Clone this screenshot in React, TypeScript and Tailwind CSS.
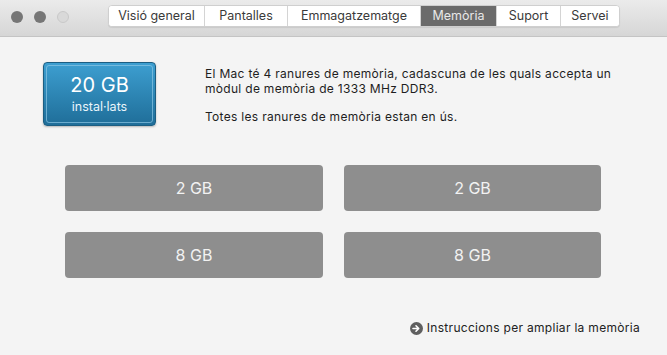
import React from 'react';

const tabs = ['Visió general', 'Pantalles', 'Emmagatzematge', 'Memòria', 'Suport', 'Servei'];
const tabWidths = ['w-[95px]', 'w-[83px]', 'w-[133px]', 'w-[76px]', 'w-[64px]', 'w-[59px]'];
const slots = ['2 GB', '2 GB', '8 GB', '8 GB'];

export default function App() {
    return (
        <div className="w-[667px] h-[355px] bg-[#f4f4f4] flex flex-col overflow-hidden" style={{ fontFamily: 'Inter, Roboto, "Liberation Sans", sans-serif' }}>

            {/* Title bar with traffic lights and tabs */}
            <div className="h-[37px] shrink-0 bg-gradient-to-b from-[#ebebeb] to-[#d6d6d6] border-b border-[#c4c4c4] flex items-start">
                <div className="flex gap-[11px] pl-[11px] pt-[11px]">
                    <div className="w-[12px] h-[12px] rounded-full bg-[#767676]" />
                    <div className="w-[12px] h-[12px] rounded-full bg-[#767676]" />
                    <div className="w-[12px] h-[12px] rounded-full bg-[#d9d9d9] border border-[#c9c9c9]" />
                </div>
                <div className="ml-[39px] mt-[5px] flex h-[22px] rounded-[4px] bg-white border border-[#cfcfcf] shadow-[0_1px_1px_rgba(0,0,0,0.08)] overflow-hidden">
                    {tabs.map((t, i) => (
                        <div
                            key={t}
                            className={`${tabWidths[i]} flex items-center justify-center text-[12.5px] ${i > 0 ? 'border-l border-[#d4d4d4]' : ''} ${t === 'Memòria' ? 'bg-[#6b6b6b] text-[#e8e8e8]' : 'bg-white text-[#3a3a3a]'}`}
                        >
                            {t}
                        </div>
                    ))}
                </div>
            </div>

            {/* Summary */}
            <div className="flex pt-[25px] pl-[43px]">
                <div className="w-[113px] h-[64px] rounded-[4px] border border-[#1c5e82] bg-gradient-to-b from-[#3d9fd1] to-[#1f6e99] p-[2px] shadow-[0_1px_2px_rgba(0,0,0,0.25)]">
                    <div className="w-full h-full rounded-[3px] border border-[#8cc6e4]/70 flex flex-col items-center justify-center text-white">
                        <div className="text-[20px] leading-[22px]">20 GB</div>
                        <div className="text-[12.5px] leading-[16px] mt-[3px] text-[#eaf5fb]">instal·lats</div>
                    </div>
                </div>
                <div className="ml-[49px] mt-[4px] text-[12px] leading-[15px] text-[#1e1e1e] tracking-[0.3px]">
                    <p>El Mac té 4 ranures de memòria, cadascuna de les quals accepta un</p>
                    <p>mòdul de memòria de 1333 MHz DDR3.</p>
                    <p className="mt-[13px]">Totes les ranures de memòria estan en ús.</p>
                </div>
            </div>

            {/* Memory slots */}
            <div className="grid grid-cols-[258px_257px] gap-x-[21px] gap-y-[21px] pl-[65px] mt-[39px]">
                {slots.map((s, i) => (
                    <div key={i} className="h-[46px] rounded-[4px] bg-[#8e8e8e] flex items-center justify-center text-[16px] text-[#f2f2f2]">
                        {s}
                    </div>
                ))}
            </div>

            {/* Footer link */}
            <div className="flex justify-end items-center pr-[27px] mt-[41px]">
                <svg width="13" height="13" viewBox="0 0 13 13" className="mr-[4px]">
                    <circle cx="6.5" cy="6.5" r="6.5" fill="#5f5f5f" />
                    <path d="M3 6.5h5.2M6 3.8l2.7 2.7L6 9.2" stroke="#fff" strokeWidth="1.6" fill="none" strokeLinecap="round" strokeLinejoin="round" />
                </svg>
                <span className="text-[12px] text-[#222] tracking-[0.3px]">Instruccions per ampliar la memòria</span>
            </div>
        </div>
    );
}
